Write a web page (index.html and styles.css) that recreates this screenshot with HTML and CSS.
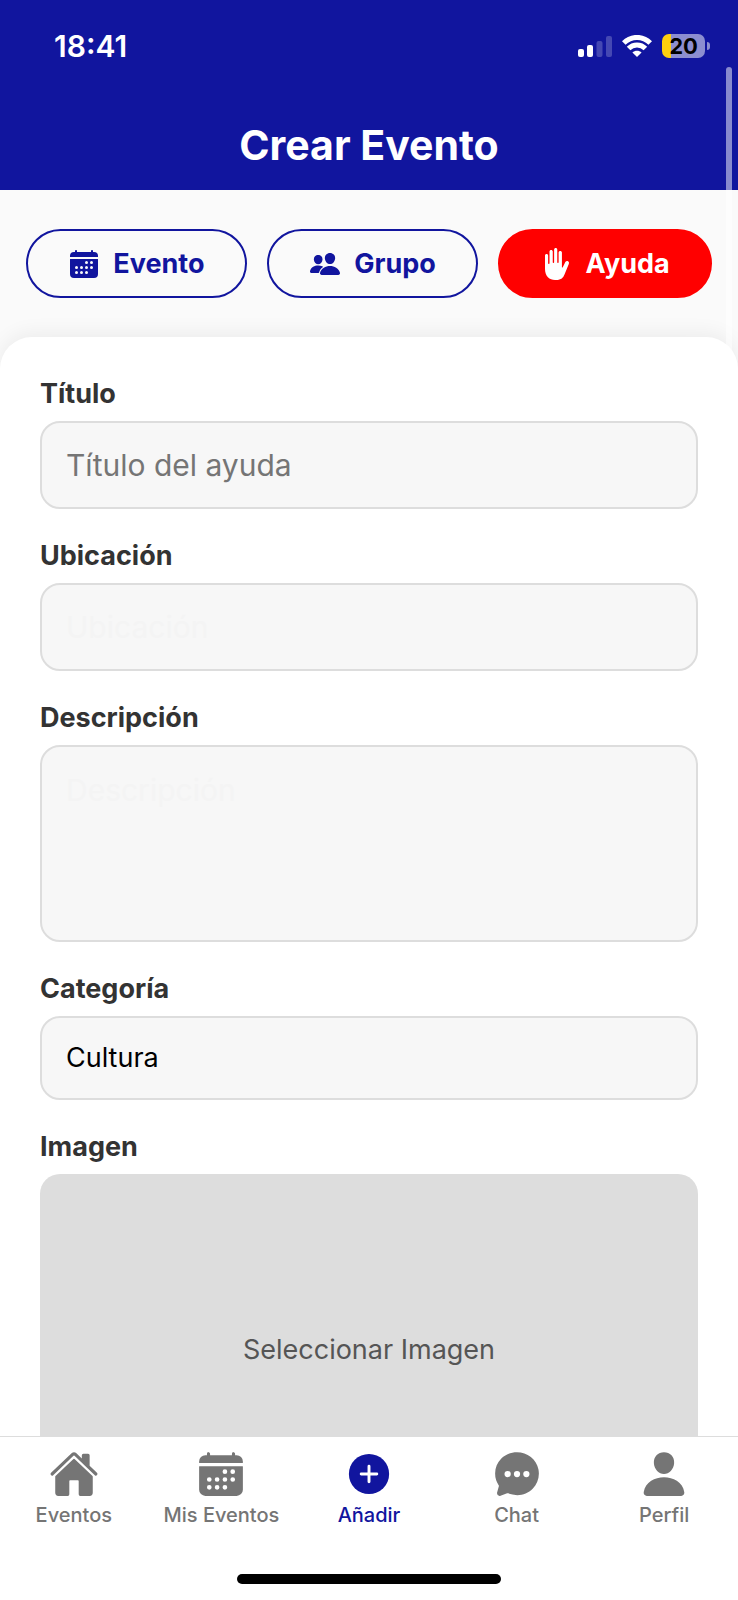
FILE: index.html
```html
<!DOCTYPE html>
<html lang="es">
<head>
<meta charset="utf-8">
<meta name="viewport" content="width=device-width, initial-scale=1">
<title>Crear Evento</title>
<link rel="stylesheet" href="styles.css">
</head>
<body class="app">
  <header class="header">
    <div class="status">
      <span class="status-time">18:41</span>
      <div class="status-icons">
        <svg class="signal" viewBox="0 0 34 22" aria-hidden="true">
          <rect x="0" y="14" width="6" height="8" rx="2"/>
          <rect x="9" y="10" width="6" height="12" rx="2"/>
          <rect class="dim" x="18.500" y="6" width="6" height="16" rx="2"/>
          <rect class="dim" x="28" y="1" width="6" height="21" rx="2"/>
        </svg>
        <svg class="wifi" viewBox="0 0 30 22" aria-hidden="true">
          <path class="arc" d="M1.800 8.100C9.200.500 20.800.500 28.200 8.100"/>
          <path class="arc" d="M6.600 13.500c4.600-4.700 12.200-4.700 16.800 0"/>
          <path d="M15 22l-4.600-4.400c2.500-2.500 6.700-2.500 9.200 0z"/>
        </svg>
        <div class="battery"><span class="battery-level">20</span></div>
      </div>
    </div>
    <h1 class="title">Crear Evento</h1>
  </header>

  <main class="content">
    <div class="switcher">
      <button class="pill" type="button">
        <svg class="pill-icon" viewBox="0 0 512 512" aria-hidden="true"><path d="M480 128a64 64 0 00-64-64h-16V48.450c0-8.610-6.620-16-15.230-16.430A16 16 0 00368 48v16H144V48.450c0-8.610-6.620-16-15.230-16.430A16 16 0 00112 48v16H96a64 64 0 00-64 64v12a4 4 0 004 4h440a4 4 0 004-4zM32 416a64 64 0 0064 64h320a64 64 0 0064-64V179a3 3 0 00-3-3H35a3 3 0 00-3 3zm344-208a24 24 0 11-24 24 24 24 0 0124-24zm0 80a24 24 0 11-24 24 24 24 0 0124-24zm-80-80a24 24 0 11-24 24 24 24 0 0124-24zm0 80a24 24 0 11-24 24 24 24 0 0124-24zm0 80a24 24 0 11-24 24 24 24 0 0124-24zm-80-80a24 24 0 11-24 24 24 24 0 0124-24zm0 80a24 24 0 11-24 24 24 24 0 0124-24zm-80-80a24 24 0 11-24 24 24 24 0 0124-24zm0 80a24 24 0 11-24 24 24 24 0 0124-24z"/></svg>
        <span>Evento</span>
      </button>
      <button class="pill" type="button">
        <svg class="pill-icon" viewBox="0 0 512 512" aria-hidden="true"><path d="M336 256c-20.560 0-40.440-9.180-56-25.840-15.130-16.250-24.370-37.920-26-61-1.740-24.620 5.770-47.260 21.140-63.760S312 80 336 80c23.830 0 45.380 9.060 60.700 25.520 15.470 16.620 23 39.220 21.260 63.630-1.670 23.110-10.900 44.770-26 61C376.440 246.820 356.570 256 336 256zM467.830 432H204.180a27.710 27.710 0 01-22-10.670 30.220 30.220 0 01-5.260-25.790c8.420-33.810 29.280-61.850 60.320-81.080C264.790 297.400 299.860 288 336 288c36.850 0 71 9 98.710 26.050 31.110 19.130 52 47.330 60.380 81.550a30.270 30.270 0 01-5.320 25.780A27.680 27.680 0 01467.830 432zM147 260c-35.190 0-66.130-32.720-69-72.930-1.420-20.600 5-39.650 18-53.620 12.860-13.830 31-21.450 51-21.450s38 7.660 50.930 21.570c13.100 14.080 19.500 33.090 18 53.520-2.870 40.200-33.800 72.910-68.930 72.910zM212.660 291.450c-17.590-8.600-40.420-12.900-65.650-12.900-29.460 0-58.070 7.680-80.570 21.620-25.510 15.830-42.670 38.880-49.600 66.710a27.390 27.390 0 004.790 23.360A25.320 25.320 0 0041.720 400h111a8 8 0 007.870-6.570c.110-.630.250-1.260.410-1.880 8.480-34.060 28.350-62.840 57.710-83.820a8 8 0 00-.630-13.390c-1.570-.920-3.370-1.890-5.420-2.890z"/></svg>
        <span>Grupo</span>
      </button>
      <button class="pill pill-active" type="button" aria-pressed="true">
        <svg class="pill-icon" viewBox="0 0 512 512" aria-hidden="true"><path d="M432.800 211.440c-15.520-8.820-34.910-2.280-43.310 13.680l-41.380 84.410a7 7 0 01-8.930 3.430 7 7 0 01-4.410-6.550V72c0-13.910-12.850-24-26.770-24s-26 10.090-26 24v156.640A11.240 11.240 0 01271.210 240 11 11 0 01260 229V24c0-13.910-10.940-24-24.860-24S210 10.090 210 24v204.640A11.240 11.240 0 01199.210 240 11 11 0 01188 229V56c0-13.910-12.080-24-26-24s-26 11.090-26 25v187.640A11.240 11.240 0 01125.210 256 11 11 0 01114 245V120c0-13.910-11.080-24-25-24s-25.120 10.220-25 24v216c0 117.410 72 176 160 176h16c88 0 115.710-39.600 136-88l68.710-169c6.620-18 3.600-34.750-11.910-43.560z"/></svg>
        <span>Ayuda</span>
      </button>
    </div>

    <form class="card">
      <div class="field">
        <label class="label" for="titulo">Título</label>
        <input class="control" id="titulo" type="text" placeholder="Título del ayuda">
      </div>
      <div class="field">
        <label class="label" for="ubicacion">Ubicación</label>
        <input class="control control-faint" id="ubicacion" type="text" placeholder="Ubicación">
      </div>
      <div class="field">
        <label class="label" for="descripcion">Descripción</label>
        <textarea class="control control-faint control-area" id="descripcion" placeholder="Descripción"></textarea>
      </div>
      <div class="field">
        <label class="label" for="categoria">Categoría</label>
        <select class="control control-select" id="categoria"><option>Cultura</option></select>
      </div>
      <div class="field">
        <label class="label" for="imagen">Imagen</label>
        <button class="image-picker" id="imagen" type="button">Seleccionar Imagen</button>
      </div>
    </form>
  </main>

  <footer class="footer">
    <nav class="tabs">
      <a class="tab" href="#eventos">
        <svg class="tab-icon" viewBox="0 0 512 512" aria-hidden="true"><path d="M261.560 101.280a8 8 0 00-11.060 0L66.400 277.150a8 8 0 00-2.470 5.790L63.900 448a32 32 0 0032 32H192a16 16 0 0016-16V328a8 8 0 018-8h80a8 8 0 018 8v136a16 16 0 0016 16h96.060a32 32 0 0032-32V282.940a8 8 0 00-2.470-5.790z"/><path d="M490.910 244.150l-74.800-71.560V64a16 16 0 00-16-16h-48a16 16 0 00-16 16v32l-57.920-55.380C272.770 35.140 264.710 32 256 32c-8.680 0-16.720 3.140-22.140 8.630l-212.700 203.500c-6.220 6-7 15.870-1.340 22.370A16 16 0 0043 267.560L250.500 69.280a8 8 0 0111.060 0l207.520 198.280a16 16 0 0022.590-.440c6.140-6.360 5.630-16.860-.760-22.970z"/></svg>
        <span>Eventos</span>
      </a>
      <a class="tab" href="#mis-eventos">
        <svg class="tab-icon" viewBox="0 0 512 512" aria-hidden="true"><path d="M480 128a64 64 0 00-64-64h-16V48.450c0-8.610-6.620-16-15.230-16.430A16 16 0 00368 48v16H144V48.450c0-8.610-6.620-16-15.230-16.430A16 16 0 00112 48v16H96a64 64 0 00-64 64v12a4 4 0 004 4h440a4 4 0 004-4zM32 416a64 64 0 0064 64h320a64 64 0 0064-64V179a3 3 0 00-3-3H35a3 3 0 00-3 3zm344-208a24 24 0 11-24 24 24 24 0 0124-24zm0 80a24 24 0 11-24 24 24 24 0 0124-24zm-80-80a24 24 0 11-24 24 24 24 0 0124-24zm0 80a24 24 0 11-24 24 24 24 0 0124-24zm0 80a24 24 0 11-24 24 24 24 0 0124-24zm-80-80a24 24 0 11-24 24 24 24 0 0124-24zm0 80a24 24 0 11-24 24 24 24 0 0124-24zm-80-80a24 24 0 11-24 24 24 24 0 0124-24zm0 80a24 24 0 11-24 24 24 24 0 0124-24z"/></svg>
        <span>Mis Eventos</span>
      </a>
      <a class="tab tab-active" href="#anadir" aria-current="page">
        <svg class="tab-icon" viewBox="0 0 512 512" aria-hidden="true"><circle cx="256" cy="256" r="206"/><path class="plus" d="M256 176v160M176 256h160"/></svg>
        <span>Añadir</span>
      </a>
      <a class="tab" href="#chat">
        <svg class="tab-icon" viewBox="0 0 512 512" aria-hidden="true"><path d="M398 81.840A227.400 227.400 0 00255.820 32C194.900 32 138 55.470 95.460 98.090 54.350 139.330 31.820 193.780 32 251.370a215.660 215.660 0 0035.650 118.760l.190.270c.280.410.570.820.860 1.220s.650.920.730 1.050l.220.400c1.130 2 2 4.440 1.230 6.900l-18.420 66.660a29.130 29.130 0 00-1.200 7.630A25.690 25.690 0 0076.830 480a29.440 29.440 0 0010.450-2.290l67.490-24.360.850-.330a14.750 14.750 0 015.840-1.150 15.120 15.120 0 015.370 1c1.620.630 16.330 6.260 31.850 10.600 12.900 3.600 39.740 9 60.770 9 59.650 0 115.350-23.100 156.830-65.060C457.360 365.770 480 310.420 480 251.490a213.500 213.500 0 00-4.780-45c-10.340-48.620-37.760-92.900-77.220-124.650z"/><g class="dots"><circle cx="160" cy="256" r="32"/><circle cx="256" cy="256" r="32"/><circle cx="352" cy="256" r="32"/></g></svg>
        <span>Chat</span>
      </a>
      <a class="tab" href="#perfil">
        <svg class="tab-icon" viewBox="0 0 512 512" aria-hidden="true"><path d="M332.640 64.580C313.180 43.570 286 32 256 32c-30.160 0-57.430 11.500-76.800 32.380-19.580 21.110-29.120 49.800-26.880 80.780C156.760 206.280 203.270 256 256 256s99.160-49.710 103.670-110.820c2.270-30.700-7.330-59.330-27.030-80.600zM432 480H80a31 31 0 01-24.200-11.130c-6.500-7.770-9.120-18.380-7.180-29.110C57.060 392.940 83.400 353.610 124.800 326c36.780-24.510 83.370-38 131.200-38s94.420 13.500 131.200 38c41.400 27.600 67.740 66.930 76.180 113.750 1.940 10.730-.680 21.340-7.180 29.110A31 31 0 01432 480z"/></svg>
        <span>Perfil</span>
      </a>
    </nav>
    <div class="home-indicator"></div>
  </footer>
  <div class="scroll-thumb"></div>
</body>
</html>
```
FILE: styles.css
```css
*, *::before, *::after { box-sizing: border-box; }

.app {
  --blue: #11159e;
  --gray: #757575;
  position: relative;
  display: flex;
  flex-direction: column;
  height: 100vh;
  margin: 0;
  overflow: hidden;
  background: #fff;
  color: #333;
  font-family: Inter, "Liberation Sans", sans-serif;
}

.header {
  flex: none;
  padding: 28px 28px 19px 54px;
  background: var(--blue);
  color: #fff;
}

.status {
  display: flex;
  align-items: center;
  justify-content: space-between;
}
.status-time {
  font-size: 30px;
  line-height: 36px;
  font-weight: 600;
}
.status-icons {
  display: flex;
  align-items: center;
  gap: 10px;
  padding-right: 5px;
}
.signal { width: 34px; height: 22px; fill: #fff; }
.signal .dim { opacity: .22; }
.wifi { width: 30px; height: 22px; fill: #fff; }
.wifi .arc { fill: none; stroke: #fff; stroke-width: 5; }
.battery {
  position: relative;
  width: 43px;
  height: 24px;
  border-radius: 7px;
  background: linear-gradient(90deg, #fecf0f 20%, #8c8ed0 20%);
  color: #000;
  text-align: center;
}
.battery::after {
  content: "";
  position: absolute;
  top: 8px;
  left: 45px;
  width: 3px;
  height: 8px;
  border-radius: 0 4px 4px 0;
  background: #8c8ed0;
}
.battery-level {
  display: block;
  font-size: 22px;
  line-height: 24px;
  font-weight: 700;
}

.title {
  margin: 55px 0 0 -26px;
  font-size: 41px;
  line-height: 52px;
  font-weight: 700;
  text-align: center;
}

.content {
  flex: 1;
  min-height: 0;
  overflow: hidden;
  background: #fafafa;
}

.switcher {
  display: flex;
  gap: 20px;
  padding: 39px 26px;
}
.pill {
  display: flex;
  flex: 1 1 auto;
  align-items: center;
  justify-content: center;
  gap: 13px;
  padding: 15px 20px;
  border: 2px solid var(--blue);
  border-radius: 35px;
  background: transparent;
  color: var(--blue);
  font: 700 27px/35px Inter, "Liberation Sans", sans-serif;
}
.pill-active {
  border-color: #f00;
  background: #f00;
  color: #fff;
}
.pill-icon { width: 32px; height: 32px; fill: currentColor; }

.card {
  display: flex;
  flex-direction: column;
  gap: 30px;
  padding: 40px;
  border-radius: 32px 32px 0 0;
  background: #fff;
  box-shadow: 0 -4px 20px rgba(0, 0, 0, .06);
}
.field {
  display: flex;
  flex-direction: column;
  gap: 10px;
}
.label {
  font-size: 27px;
  line-height: 34px;
  font-weight: 700;
}
.control {
  width: 100%;
  height: 88px;
  margin: 0;
  padding: 24px;
  border: 2px solid #ddd;
  border-radius: 20px;
  background: #f7f7f7;
  color: #000;
  font: 400 30px/38px Inter, "Liberation Sans", sans-serif;
}
.control::placeholder { color: var(--gray); opacity: 1; }
.control-faint::placeholder { color: #f4f4f4; }
.control-area {
  display: block;
  height: 197px;
  resize: none;
}
.control-select {
  height: 84px;
  appearance: none;
  font-size: 27px;
  line-height: 32px;
}
.image-picker {
  height: 352px;
  border: 0;
  border-radius: 20px;
  background: #ddd;
  color: #555;
  font: 400 27px/34px Inter, "Liberation Sans", sans-serif;
}

.footer {
  flex: none;
  padding: 12px 0 16px;
  border-top: 1px solid #ddd;
  background: #fff;
}
.tabs { display: flex; }
.tab {
  display: flex;
  flex: 1 1 0;
  flex-direction: column;
  align-items: center;
  gap: 4px;
  color: var(--gray);
  font-size: 20px;
  line-height: 24px;
  font-weight: 500;
  text-decoration: none;
}
.tab-active { color: var(--blue); }
.tab-icon { width: 50px; height: 50px; fill: currentColor; }
.plus { fill: none; stroke: #fff; stroke-width: 30; stroke-linecap: round; }
.dots { fill: #fff; }

.home-indicator {
  width: 264px;
  height: 10px;
  margin: 47px auto 0;
  border-radius: 5px;
  background: #000;
}

.scroll-thumb {
  position: absolute;
  top: 67px;
  right: 6px;
  width: 6px;
  height: 290px;
  border-radius: 3px;
  background: rgba(255, 255, 255, .5);
}
```
